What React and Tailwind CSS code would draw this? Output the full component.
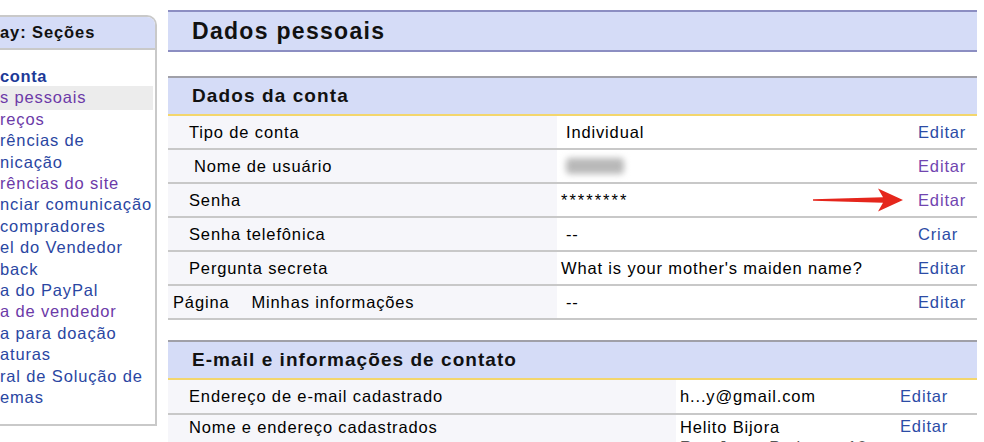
const BLUE = "text-[#2c4ca6]";
const PURPLE = "text-[#7145b0]";

const sideItems = [
  { t: "conta", c: "text-[#1d3a98] font-bold tracking-[0.6px]" },
  { t: "s pessoais", c: "text-[#6c3aa8] bg-[#ececec] mr-[2px] py-[1px] -my-[1px]" },
  { t: "reços", c: "text-[#6c3aa8]" },
  { t: "rências de", c: "text-[#2a46a2]" },
  { t: "nicação", c: "text-[#2a46a2]" },
  { t: "rências do site", c: "text-[#6c3aa8]" },
  { t: "nciar comunicação", c: "text-[#2a46a2]" },
  { t: "compradores", c: "text-[#2a46a2]" },
  { t: "el do Vendedor", c: "text-[#2a46a2]" },
  { t: "back", c: "text-[#2a46a2]" },
  { t: "a do PayPal", c: "text-[#2a46a2]" },
  { t: "a de vendedor", c: "text-[#6c3aa8]" },
  { t: "a para doação", c: "text-[#2a46a2]" },
  { t: "aturas", c: "text-[#2a46a2]" },
  { t: "ral de Solução de", c: "text-[#2a46a2]" },
  { t: "emas", c: "text-[#2a46a2]" },
];

function Arrow() {
  return (
    <svg width="92" height="24" viewBox="0 0 92 24" className="absolute left-[644px] top-[4px]">
      <path
        d="M1 11.2 Q36 10.2 71 9.2 L66 0.5 L91 12 L66 23.5 L71 14.8 Q36 13.8 1 12.8 Z"
        fill="#e5261c"
      />
    </svg>
  );
}

function Row({ label, labelPl = "pl-[21px]", value, valuePl = "pl-[9px]", action, actionColor, extra }) {
  return (
    <div className="relative flex h-[34px] border-b-2 border-[#c8c8c8]">
      <div className={`w-[389px] shrink-0 bg-[#f6f6fa] flex items-center ${labelPl}`}>{label}</div>
      <div className={`flex-1 flex items-center ${valuePl}`}>{value}</div>
      <div className={`w-[59px] shrink-0 flex items-center ${actionColor}`}>{action}</div>
      {extra}
    </div>
  );
}

export default function App() {
  return (
    <div className="w-[984px] h-[442px] overflow-hidden bg-white flex font-['Liberation_Sans',Arial,sans-serif] text-[16.5px] tracking-[0.85px] text-black">
      <aside className="w-[157px] shrink-0 mt-[15px] h-[411px] border-t-2 border-r-2 border-b-2 border-[#c9c9c9] rounded-tr-[10px] overflow-hidden flex flex-col">
        <div className="h-[33px] shrink-0 bg-[#d5dcf7] border-b-2 border-[#c9c9c9] flex items-center font-bold text-[16.5px] tracking-[0.9px] text-[#111]">
          ay: Seções
        </div>
        <ul className="pt-[16px] leading-[21.4px]">
          {sideItems.map((it, i) => (
            <li key={i} className={`whitespace-nowrap ${it.c}`}>
              {it.t}
            </li>
          ))}
        </ul>
      </aside>

      <main className="ml-[11px] w-[809px] shrink-0 pt-[10px]">
        <div className="h-[42px] bg-[#d5dcf7] border-t-2 border-b-2 border-[#8c8ec2] flex items-center pl-[24px] font-bold text-[23px] tracking-[1.3px] text-[#111]">
          Dados pessoais
        </div>

        <div className="mt-[24px] h-[40px] bg-[#d5dcf7] border-t-2 border-[#a0a0a8] border-b-2 border-b-[#f3d66c] flex items-center pl-[24px] font-bold text-[19px] tracking-[1.1px] text-[#111]">
          Dados da conta
        </div>
        <Row label="Tipo de conta" value="Individual" action="Editar" actionColor={BLUE} />
        <Row
          label="Nome de usuário"
          labelPl="pl-[26px]"
          value={<div className="w-[58px] h-[16px] bg-[#b9b9b9] blur-[3px] rounded-sm" />}
          action="Editar"
          actionColor={PURPLE}
        />
        <Row
          label="Senha"
          value={<span className="tracking-[2px]">********</span>}
          valuePl="pl-[4px]"
          action="Editar"
          actionColor={PURPLE}
          extra={<Arrow />}
        />
        <Row label="Senha telefônica" value="--" action="Criar" actionColor={BLUE} />
        <Row
          label="Pergunta secreta"
          value="What is your mother's maiden name?"
          valuePl="pl-[4px]"
          action="Editar"
          actionColor={BLUE}
        />
        <Row
          label={
            <>
              <span>Página</span>
              <span className="ml-[22px]">Minhas informações</span>
            </>
          }
          labelPl="pl-[5px]"
          value="--"
          action="Editar"
          actionColor={BLUE}
        />

        <div className="mt-[20px] h-[40px] bg-[#d5dcf7] border-t-2 border-[#a0a0a8] border-b-2 border-b-[#f3d66c] flex items-center pl-[24px] font-bold text-[19px] tracking-[1.05px] text-[#111]">
          E-mail e informações de contato
        </div>
        <div className="flex h-[35px] border-b-2 border-[#c8c8c8]">
          <div className="w-[508px] shrink-0 bg-[#f6f6fa] flex items-center pl-[21px]">Endereço de e-mail cadastrado</div>
          <div className="w-[224px] shrink-0 flex items-center pl-[4px]">h...y@gmail.com</div>
          <div className={`flex-1 flex items-center ${BLUE}`}>Editar</div>
        </div>
        <div className="flex h-[60px] leading-[20px]">
          <div className="w-[508px] shrink-0 bg-[#f6f6fa] pl-[21px] pt-[2px]">Nome e endereço cadastrados</div>
          <div className="w-[224px] shrink-0 pl-[4px] pt-[2px]">
            <div>Helito Bijora</div>
            <div className="text-[#555]">Rua Jorge Pedroso, 10</div>
          </div>
          <div className={`flex-1 pt-[1px] ${BLUE}`}>Editar</div>
        </div>
      </main>
    </div>
  );
}
